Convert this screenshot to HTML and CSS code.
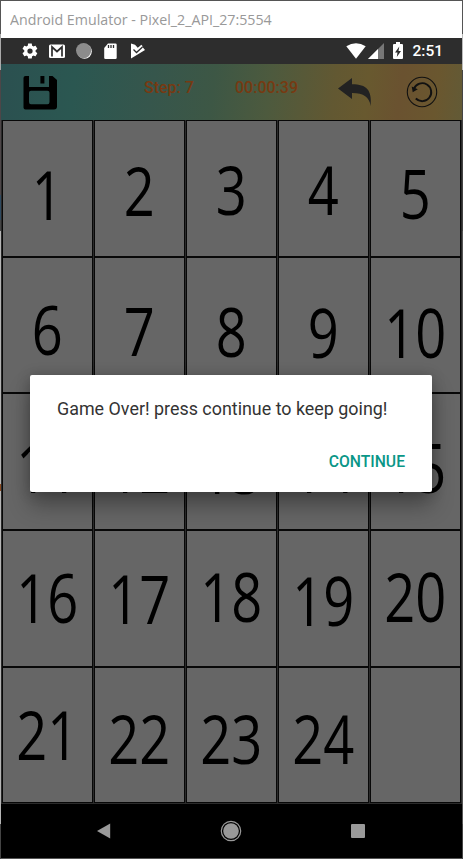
FILE: index.html
```
<!DOCTYPE html>
<html lang="en">
<head>
<meta charset="utf-8">
<title>Number puzzle</title>
<link rel="stylesheet" href="styles.css">
</head>
<body>
<div class="window">
  <header class="titlebar"><span>Android Emulator - Pixel_2_API_27:5554</span></header>
  <div class="statusbar">
    <div class="notifications">
      <svg width="18" height="18" viewBox="0 0 24 24"><path fill="#fff" d="M19.4 13c.1-.3.1-.6.1-1s0-.7-.1-1l2.1-1.600c.2-.2.3-.5.1-.7l-2-3.500c-.1-.2-.4-.3-.6-.2l-2.500 1c-.5-.4-1.100-.7-1.700-1l-.4-2.600c0-.2-.2-.4-.5-.4h-4c-.2 0-.5.2-.5.4l-.4 2.600c-.6.3-1.200.6-1.700 1l-2.500-1c-.2-.1-.5 0-.6.2l-2 3.500c-.1.2-.1.5.1.7l2.100 1.600c0 .3-.1.6-.1 1s0 .7.1 1l-2.100 1.600c-.2.2-.3.5-.1.7l2 3.500c.1.2.4.3.6.2l2.500-1c.5.4 1.100.7 1.700 1l.4 2.600c0 .2.3.4.5.4h4c.3 0 .5-.2.5-.4l.4-2.600c.6-.3 1.200-.6 1.700-1l2.500 1c.2.1.5 0 .6-.2l2-3.500c.1-.2.1-.5-.1-.7zM12 15.500a3.500 3.500 0 1 1 0-7 3.500 3.500 0 0 1 0 7z"/></svg>
      <svg width="18" height="18" viewBox="0 0 18 18"><rect x="1" y="2.500" width="16" height="13.500" rx="1.500" fill="#fff"/><path d="M4 14.500V5l5 4.500L14 5v9.500" fill="none" stroke="#2d2d2d" stroke-width="1.700"/></svg>
      <svg width="18" height="18" viewBox="0 0 18 18"><circle cx="9.500" cy="9.500" r="7.300" fill="#fff"/><circle cx="8.600" cy="8.600" r="7.600" fill="#8c8c8c"/></svg>
      <svg width="18" height="18" viewBox="0 0 18 18"><path d="M6 1.500h7.500q1.200 0 1.200 1.200v13q0 1.200-1.200 1.200h-10q-1.300 0-1.300-1.200V6z" fill="#fff"/><path d="M6.500 3v3M9 3v3M11.500 3v3" stroke="#2d2d2d" stroke-width="1.300"/></svg>
      <svg width="18" height="18" viewBox="0 0 18 18"><path d="M2 1.500l4 1.200L9 6l4-1.500 3 3.500L2 16.500z" fill="#fff"/><path d="M9.500 6.500L13 3.500" stroke="#fff" stroke-width="2"/><path d="M4.500 7.500l3 3 6-5.500" fill="none" stroke="#2d2d2d" stroke-width="1.300"/></svg>
    </div>
    <div class="system">
      <svg width="20" height="16" viewBox="0 0 20 16"><path d="M.3 3.300Q10-3 19.700 3.300L10 15.800z" fill="#fff"/></svg>
      <svg class="signal" width="16" height="16" viewBox="0 0 16 16"><path d="M16 0v16H0z" fill="#777"/><path d="M10 6v10H0z" fill="#fff"/></svg>
      <svg class="battery" width="10" height="18" viewBox="0 0 10 18"><path d="M3 0h4v2h2q1 0 1 1v13q0 1-1 1H1q-1 0-1-1V3q0-1 1-1h2z" fill="#fff"/><path d="M6.300 4.500L2 10.500h2.500L3.800 15 8 9H5.500z" fill="#2d2d2d"/></svg>
      <span class="clock">2:51</span>
    </div>
  </div>
  <div class="toolbar">
    <svg class="save" width="34" height="34" viewBox="0 0 34 34"><path d="M2.500 0H6v11h20V0h3.500L34 4v26.500q0 3-3 3H2.500Q.5 33.500.5 31.500V2q0-2 2-2zM8 14.700q-2 0-2 2V26q0 2.200 2 2.200h16.500q2 0 2-2.200v-9.300q0-2-2-2zM17.400 0h4v7.500h-4z" fill-rule="evenodd"/></svg>
    <span class="step">Step: 7</span>
    <span class="timer">00:00:39</span>
    <svg class="undo" width="34" height="28" viewBox="0 0 34 28"><path fill="#222" d="M0 10.500L14 0v6.300c15 0 20 6 18.700 21.700-1.500-9-6.700-13-18.700-13V21z"/></svg>
    <svg class="restart" width="32" height="32" viewBox="0 0 32 32"><g fill="none" stroke="#111"><circle cx="16" cy="16" r="14.700" stroke-width="1.100"/><path d="M8 12.500A9 9 0 1 1 9.800 22.500" stroke-width="1.900"/></g><path d="M5.700 10.500l1 5.800 5.100-3z" fill="#111"/></svg>
  </div>
  <main class="board">
    <div class="tile"><span style="--y:0px">1</span></div>
    <div class="tile"><span style="--y:-4px">2</span></div>
    <div class="tile"><span style="--y:-5.500px">3</span></div>
    <div class="tile"><span style="--y:-5px">4</span></div>
    <div class="tile"><span style="--y:-1.500px">5</span></div>
    <div class="tile"><span style="--y:-2.500px">6</span></div>
    <div class="tile"><span style="--y:-1.500px">7</span></div>
    <div class="tile"><span style="--y:-.500px">8</span></div>
    <div class="tile"><span style="--y:.500px">9</span></div>
    <div class="tile"><span style="--y:.500px">10</span></div>
    <div class="tile"><span style="--y:-.500px">11</span></div>
    <div class="tile"><span style="--y:0px">12</span></div>
    <div class="tile"><span style="--y:1px">13</span></div>
    <div class="tile"><span style="--y:0px">14</span></div>
    <div class="tile"><span style="--y:0px">15</span></div>
    <div class="tile"><span style="--y:-7px">16</span></div>
    <div class="tile"><span style="--y:-6.500px">17</span></div>
    <div class="tile"><span style="--y:-8.500px">18</span></div>
    <div class="tile"><span style="--y:-4.500px">19</span></div>
    <div class="tile"><span style="--y:-8.500px">20</span></div>
    <div class="tile"><span style="--y:-7px">21</span></div>
    <div class="tile"><span style="--y:-3px">22</span></div>
    <div class="tile"><span style="--y:-3px">23</span></div>
    <div class="tile"><span style="--y:-3.500px">24</span></div>
    <div class="tile"></div>
  </main>
  <nav class="navbar">
    <svg width="24" height="24" viewBox="0 0 24 24"><path d="M6 12L19.200 4.500v15z" fill="#999"/></svg>
    <svg width="24" height="24" viewBox="0 0 24 24"><circle cx="12" cy="12" r="9.700" fill="none" stroke="#999" stroke-width="1.200"/><circle cx="12" cy="12" r="7.800" fill="#999"/></svg>
    <svg width="24" height="24" viewBox="0 0 24 24"><rect x="5" y="5" width="14" height="14" rx="1" fill="#999"/></svg>
  </nav>
  <div class="dialog" role="dialog">
    <p>Game Over! press continue to keep going!</p>
    <button>CONTINUE</button>
  </div>
</div>
</body>
</html>
```
FILE: styles.css
```
* { box-sizing: border-box; }
body { margin: 0; background: #555; font-family: Roboto, sans-serif; }
svg { display: block; flex: none; }
.window {
  position: relative;
  width: 463px;
  height: 859px;
  padding: 1px;
  background:
    linear-gradient(#555 34px, #bbb 34px 70px, #444 70px 231px, #555 231px 824px, #444 824px) right / 1px 100% no-repeat,
    linear-gradient(#555 34px, #aaa 34px 70px, #4d4648 70px 195px, #2f4a60 195px 220px, #444 220px 231px, #b5b5b5 231px 484px, #8a4a20 484px 491px, #b5b5b5 491px 824px, #444 824px) left / 1px 100% no-repeat,
    #555;
  overflow: hidden;
}
.titlebar {
  height: 37px;
  padding: 0 9px;
  background: #fff;
  color: #999;
  font: 15px/37px "Open Sans", "Noto Sans", sans-serif;
  white-space: nowrap;
}
.titlebar span { display: inline-block; transform: scaleX(.949); transform-origin: left; }
.statusbar {
  display: flex;
  justify-content: space-between;
  height: 26px;
  padding: 0 19px 0 20px;
  background: #2d2d2d;
}
.notifications { display: flex; gap: 9px; padding-top: 4px; }
.system { display: flex; padding-top: 5px; }
.signal { margin-left: 2px; }
.battery { margin-left: 9px; margin-top: -1px; }
.clock { margin-left: 9px; color: #fff; font: 500 15.500px/17px Roboto, sans-serif; }
.toolbar {
  display: grid;
  grid-template-columns: 121px 91px 103px 68px 1fr;
  height: 56px;
  padding-left: 22px;
  align-items: start;
  background: linear-gradient(97deg, #2b5050 0%, #2b5751 16%, #36564c 33%, #3d5745 46%, #4d5a3e 58%, #625832 72%, #68592f 79%, #6a5230 86%, #6a572f 94%, #625a36 100%);
}
.save { margin-top: 12px; }
.step, .timer { padding-top: 14px; color: #773a12; font: 500 16px/19px Roboto, sans-serif; white-space: nowrap; }
.undo { margin-top: 14px; }
.restart { margin-top: 12px; }
.board {
  display: grid;
  grid-template-columns: repeat(5, 92px);
  grid-template-rows: repeat(5, 136.700px);
  height: 684px;
  padding-left: 1px;
  background: #2b2b2b;
}
.tile {
  display: flex;
  justify-content: center;
  margin-right: 1px;
  border: 1px solid #080808;
  background: #666;
  overflow: hidden;
}
.tile span {
  height: 90px;
  margin-top: 28px;
  color: #000;
  font: 67px/90px "Open Sans", "Noto Sans", sans-serif;
  transform: translateY(var(--y)) scaleX(.81);
}
.navbar {
  display: flex;
  justify-content: space-between;
  align-items: center;
  height: 54px;
  padding: 0 92px 0 90px;
  background: #000;
}
.dialog {
  position: absolute;
  left: 30px;
  top: 375px;
  width: 402px;
  height: 117px;
  padding: 22px 27px 0;
  display: flex;
  flex-direction: column;
  background: #fff;
  border-radius: 2px;
  box-shadow: 0 14px 22px rgba(0, 0, 0, .3), 0 1px 14px rgba(0, 0, 0, .22);
}
.dialog p { margin: 0; color: #333; font-size: 17.900px; line-height: 24px; white-space: nowrap; }
.dialog button {
  align-self: flex-end;
  margin-top: 31px;
  padding: 0;
  border: 0;
  background: none;
  color: #0a9687;
  font: 500 15.700px/20px Roboto, sans-serif;
}
```
